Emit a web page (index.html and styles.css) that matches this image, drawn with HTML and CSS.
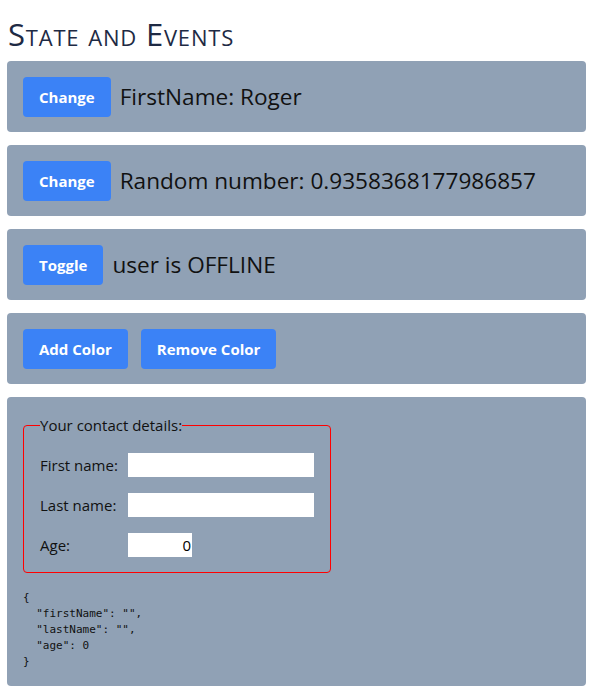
FILE: index.html
```html
<!DOCTYPE html>
<html>
<head>
<meta charset="utf-8">
<link rel="stylesheet" href="styles.css">
</head>
<body>
<h1 class="title">State and Events</h1>
<div class="card">
  <button class="btn">Change</button>
  <span class="value">FirstName: Roger</span>
</div>
<div class="card">
  <button class="btn">Change</button>
  <span class="value">Random number: 0.9358368177986857</span>
</div>
<div class="card">
  <button class="btn">Toggle</button>
  <span class="value">user is OFFLINE</span>
</div>
<div class="card">
  <button class="btn">Add Color</button>
  <button class="btn">Remove Color</button>
</div>
<div class="card form-card">
  <fieldset class="contact">
    <legend>Your contact details:</legend>
    <div class="row"><label>First name:</label><input class="field" type="text"></div>
    <div class="row"><label>Last name:</label><input class="field" type="text"></div>
    <div class="row"><label>Age:</label><input class="field age" type="text" value="0"></div>
  </fieldset>
<pre class="json">{
  "firstName": "",
  "lastName": "",
  "age": 0
}</pre>
</div>
</body>
</html>
```
FILE: styles.css
```css
body {
  margin: 0;
  padding: 0 8px 0 7px;
  font-family: "Open Sans", "Noto Sans", sans-serif;
  color: #111;
  background: #fff;
}
.title {
  font-variant: small-caps;
  font-weight: 400;
  font-size: 31px;
  color: #1e2a44;
  margin: 0;
  padding: 14px 0 7px 1px;
  line-height: 40px;
  letter-spacing: 0.8px;
}
.card {
  background: #90a1b5;
  border-radius: 4px;
  padding: 16px;
  display: flex;
  align-items: center;
  gap: 13px;
  margin-bottom: 13px;
  height: 39px;
}
.btn {
  background: #3b82f6;
  color: #fff;
  border: none;
  border-radius: 4px;
  font-family: inherit;
  font-weight: 700;
  font-size: 15px;
  height: 40px;
  padding: 0 16px;
}
.value {
  font-size: 22.6px;
  margin-left: -4px;
}
.form-card {
  display: block;
  height: auto;
  padding: 18px 16px 16px 16px;
}
.contact {
  width: 307px;
  box-sizing: border-box;
  border: 1px solid #ff0000;
  border-radius: 4px;
  margin: 0;
  padding: 7px 16px 15px 16px;
}
.contact legend {
  padding: 0;
  font-size: 15px;
}
.row {
  display: flex;
  align-items: center;
  height: 24px;
  margin-top: 16px;
  font-size: 15px;
}
.row:first-of-type {
  margin-top: 11px;
}
.row label {
  width: 88px;
}
.field {
  width: 186px;
  height: 24px;
  box-sizing: border-box;
  border: none;
  padding: 0 2px;
  font-family: inherit;
  font-size: 15px;
  background: #fff;
}
.field.age {
  width: 64px;
  text-align: right;
  padding-right: 1px;
}
.json {
  font-family: "DejaVu Sans Mono", monospace;
  font-size: 11px;
  line-height: 16px;
  margin: 17px 0 0 0;
  color: #111;
}
```
